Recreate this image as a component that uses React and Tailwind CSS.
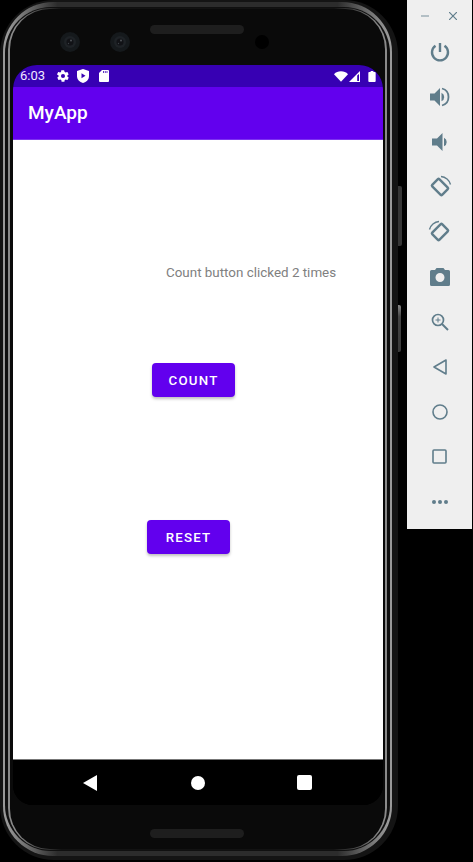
import { useState } from "react";

const panelIcon = "#607d8b";

function StatusIcons() {
  return (
    <div className="flex items-center ml-[11px]">
      <svg width="14" height="14" viewBox="0 0 24 24" fill="#fff">
        <path d="M19.4 13c.1-.3.1-.7.1-1s0-.7-.1-1l2.1-1.600c.2-.2.2-.4.1-.6l-2-3.500c-.1-.2-.4-.3-.6-.2l-2.500 1c-.5-.4-1.100-.7-1.700-1L14 2.400c0-.2-.2-.4-.5-.4h-4c-.3 0-.5.2-.5.400l-.4 2.700c-.6.3-1.200.6-1.700 1l-2.500-1c-.2-.1-.5 0-.6.2l-2 3.500c-.1.2-.1.4.1.6L4.500 11c0 .3-.1.700-.1 1s0 .7.1 1l-2.100 1.600c-.2.2-.2.4-.1.6l2 3.500c.1.2.4.3.6.2l2.500-1c.5.4 1.100.7 1.700 1l.4 2.700c0 .2.2.4.5.4h4c.3 0 .5-.2.5-.4l.4-2.700c.6-.3 1.200-.6 1.700-1l2.500 1c.2.1.5 0 .6-.2l2-3.500c.1-.2.1-.4-.1-.6zM12 15.500a3.500 3.500 0 1 1 0-7 3.500 3.500 0 0 1 0 7z" />
      </svg>
      <svg width="12" height="14" viewBox="0 0 12 14" className="ml-[7px]">
        <path d="M6 0 12 2v5c0 3.400-2.500 6-6 7-3.500-1-6-3.600-6-7V2z" fill="#fff" />
        <path d="M4.500 4.200v5l4-2.500z" fill="#3700b3" />
      </svg>
      <svg width="10" height="12" viewBox="0 0 10 12" className="ml-[10px]">
        <path d="M3 0h6a1 1 0 0 1 1 1v10a1 1 0 0 1-1 1H1a1 1 0 0 1-1-1V3z" fill="#fff" />
        <path d="M4.500 1v2M6.300 1v2M8 1v2" stroke="#3700b3" strokeWidth="0.8" />
      </svg>
    </div>
  );
}

function SystemIcons() {
  return (
    <div className="flex items-center">
      <svg width="14" height="11" viewBox="0 0 15 11">
        <path d="M0 3C2 1 4.600 0 7.500 0S13 1 15 3l-7.500 8z" fill="#fff" />
      </svg>
      <svg width="12" height="11" viewBox="0 0 12 11" className="ml-[1px]">
        <path d="M0 11 11 0v11z" fill="#fff" />
        <path d="M8.200 4.500v5.500h1.800V3z" fill="#3700b3" />
      </svg>
      <svg width="8" height="11" viewBox="0 0 8 12" className="ml-[7px]">
        <path d="M2.500 0h3v1H7a1 1 0 0 1 1 1v9a1 1 0 0 1-1 1H1a1 1 0 0 1-1-1V2a1 1 0 0 1 1-1h1.500z" fill="#fff" />
      </svg>
    </div>
  );
}

function Screen() {
  const [count, setCount] = useState(2);
  return (
    <div className="flex flex-col w-[370px] h-[740px] rounded-t-[24px] rounded-b-[20px] overflow-hidden bg-black shrink-0">
      <div className="h-[22px] bg-[#3700b3] flex items-center justify-between pl-[7px] pr-[7px] shrink-0">
        <div className="flex items-center">
          <span className="text-[13px] text-[#f0e8ff] font-['Roboto',sans-serif]">6:03</span>
          <StatusIcons />
        </div>
        <SystemIcons />
      </div>
      <div className="h-[53px] bg-[#6200ee] flex items-center pl-[15px] pt-[1px] border-b border-[#7d33f0] shrink-0">
        <span className="text-[19px] font-medium text-white font-['Roboto',sans-serif]">MyApp</span>
      </div>
      <div className="h-[620px] bg-white flex flex-col items-start shrink-0 border-b border-[#777] font-['Roboto',sans-serif]">
        <p className="ml-[153px] mt-[123px] h-[19px] leading-[19px] text-[13.4px] text-[#808080]">
          Count button clicked {count} times
        </p>
        <button
          onClick={() => setCount(count + 1)}
          className="ml-[139px] mt-[81px] w-[83px] h-[34px] pt-[1px] rounded-[4px] bg-[#6200ee] text-white text-[13.3px] font-medium tracking-[1.2px] shadow-[0_2px_3px_rgba(0,0,0,0.25)]"
        >
          COUNT
        </button>
        <button
          onClick={() => setCount(0)}
          className="ml-[134px] mt-[123px] w-[83px] h-[34px] pt-[1px] rounded-[4px] bg-[#6200ee] text-white text-[13.3px] font-medium tracking-[1.2px] shadow-[0_2px_3px_rgba(0,0,0,0.25)]"
        >
          RESET
        </button>
      </div>
      <div className="flex-1 flex items-center bg-black">
        <svg width="14" height="16" viewBox="0 0 14 16" className="ml-[70px]">
          <path d="M14 0v16L0 8z" fill="#fff" />
        </svg>
        <div className="w-[14px] h-[14px] rounded-full bg-white ml-[94px]" />
        <div className="w-[15px] h-[15px] rounded-[2px] bg-white ml-[92px]" />
      </div>
    </div>
  );
}

function Speaker({ className }) {
  return <div className={"w-[94px] h-[9px] rounded-full bg-[#1e1e1e] shrink-0 " + className} />;
}

function Camera({ className }) {
  return (
    <svg width="20" height="20" viewBox="0 0 20 20" className={"shrink-0 " + className}>
      <circle cx="10" cy="10" r="10" fill="#15191c" />
      <circle cx="10" cy="10" r="6" fill="#1e2226" />
      <circle cx="10" cy="10" r="3.500" fill="#111216" />
      <circle cx="11" cy="8.500" r="0.900" fill="#53575c" />
      <circle cx="8.500" cy="11.500" r="0.700" fill="#3c4046" />
    </svg>
  );
}

function Phone() {
  return (
    <div className="relative w-[398px] h-[860px] shrink-0 rounded-[54px] bg-[#141414] pt-[2px] pb-[4px] pl-[3px] pr-[6px]">
      {/* side keys */}
      <div className="absolute left-[398px] top-[186px] w-[4px] h-[60px] rounded-r-[2px] bg-[#363636]" />
      <div className="absolute left-[398px] top-[305px] w-[3px] h-[47px] rounded-r-[2px] bg-[linear-gradient(to_bottom,#888,#444_25%,#3a3a3a)]" />
      <div className="w-full h-full rounded-[50px] py-[5px] px-[2px] bg-[linear-gradient(to_right,#999_0%,#999_1%,#2c2c2c_14%,#2c2c2c_86%,#999_99%,#999_100%)]">
        <div className="w-full h-full rounded-[46px] py-[1px] px-[3px] bg-[#101010]">
          <div className="w-full h-full rounded-[42px] py-[1px] px-[2px] bg-[linear-gradient(to_right,#8a8a8a_0%,#8a8a8a_2%,#121212_14%,#121212_86%,#8a8a8a_98%,#8a8a8a_100%)]">
            <div className="w-full h-full rounded-[40px] pl-[3px] pr-[2px] bg-[#0a0a0a] flex flex-col">
              <div className="w-[370px] h-[56px] flex items-start shrink-0">
                <Camera className="ml-[47px] mt-[23px]" />
                <Camera className="ml-[30px] mt-[23px]" />
                <Speaker className="ml-[20px] mt-[16px]" />
                <div className="w-[14px] h-[14px] rounded-full bg-black ml-[11px] mt-[26px]" />
              </div>
              <Screen />
              <Speaker className="mt-[24px] ml-[137px]" />
            </div>
          </div>
        </div>
      </div>
    </div>
  );
}

function PanelIcon({ children }) {
  return <div className="h-[45px] flex items-center justify-center">{children}</div>;
}

function SidePanel() {
  return (
    <div className="w-[65px] h-[529px] ml-[9px] bg-[#efefef] flex flex-col shrink-0">
      <div className="flex items-center justify-between h-[32px] pl-[14px] pr-[15px]">
        <svg width="8" height="8" viewBox="0 0 8 8"><path d="M0 4h8" stroke={panelIcon} strokeWidth="1.200" opacity="0.7" /></svg>
        <svg width="8" height="8" viewBox="0 0 8 8"><path d="M0 0l8 8M8 0 0 8" stroke={panelIcon} strokeWidth="1.200" /></svg>
      </div>
      <div className="mt-[-3px]">
        <PanelIcon>
          <svg width="20" height="20" viewBox="0 0 20 20" fill="none" stroke={panelIcon} strokeWidth="2.400">
            <path d="M10 1v9" />
            <path d="M5.500 3.800a8 8 0 1 0 9 0" />
          </svg>
        </PanelIcon>
        <PanelIcon>
          <svg width="20" height="20" viewBox="0 0 20 20" fill="none">
            <path d="M0 6.500h4.500L10 1v18l-5.500-5.500H0z" fill={panelIcon} />
            <path d="M11.500 5.800a4.600 4.600 0 0 1 0 8.400z" fill={panelIcon} />
            <path d="M12 1.500c4 1 6.500 4.500 6.500 8.500s-2.500 7.500-6.500 8.500" stroke={panelIcon} strokeWidth="1.800" />
          </svg>
        </PanelIcon>
        <PanelIcon>
          <svg width="16" height="20" viewBox="0 0 16 20">
            <path d="M0 6.500h5L10.500 1v18L5 13.500H0z" fill={panelIcon} />
            <path d="M12 5.800a4.600 4.600 0 0 1 0 8.400z" fill={panelIcon} />
          </svg>
        </PanelIcon>
        <PanelIcon>
          <svg width="24" height="24" viewBox="0 0 24 24" fill="none" stroke={panelIcon}>
            <rect x="5" y="7" width="14" height="10" rx="1" strokeWidth="2.400" transform="rotate(45 12 12)" />
            <path d="M13 1.500c4.500.3 8.500 3.700 9.500 8" strokeWidth="1.400" />
          </svg>
        </PanelIcon>
        <PanelIcon>
          <svg width="24" height="24" viewBox="0 0 24 24" fill="none" stroke={panelIcon}>
            <rect x="5" y="7" width="14" height="10" rx="1" strokeWidth="2.400" transform="rotate(-45 12 12)" />
            <path d="M11 1.500C6.500 1.800 2.500 5.200 1.500 9.500" strokeWidth="1.400" />
          </svg>
        </PanelIcon>
        <PanelIcon>
          <svg width="20" height="18" viewBox="0 0 20 18">
            <path fillRule="evenodd" d="M6.500 0h7L15 2h3.500A1.500 1.500 0 0 1 20 3.500v13a1.500 1.500 0 0 1-1.500 1.500h-17A1.500 1.500 0 0 1 0 16.500v-13A1.500 1.500 0 0 1 1.500 2H5zM10 5a4.500 4.500 0 1 0 0 9 4.500 4.500 0 0 0 0-9z" fill={panelIcon} />
          </svg>
        </PanelIcon>
        <PanelIcon>
          <svg width="18" height="18" viewBox="0 0 18 18" fill="none" stroke={panelIcon}>
            <circle cx="7" cy="7" r="5.500" strokeWidth="1.700" />
            <path d="M11 11l6 6" strokeWidth="2" />
            <path d="M7 4.500v5M4.500 7h5" strokeWidth="1" />
          </svg>
        </PanelIcon>
        <PanelIcon>
          <svg width="14" height="16" viewBox="0 0 14 16" fill="none" stroke={panelIcon} strokeWidth="1.600" strokeLinejoin="round">
            <path d="M13 1v14L1 8z" />
          </svg>
        </PanelIcon>
        <PanelIcon>
          <svg width="16" height="16" viewBox="0 0 16 16" fill="none" stroke={panelIcon} strokeWidth="1.600">
            <circle cx="8" cy="8" r="7" />
          </svg>
        </PanelIcon>
        <PanelIcon>
          <svg width="15" height="15" viewBox="0 0 15 15" fill="none" stroke={panelIcon} strokeWidth="1.600">
            <rect x="1" y="1" width="13" height="13" rx="1" />
          </svg>
        </PanelIcon>
        <PanelIcon>
          <svg width="16" height="4" viewBox="0 0 16 4" fill={panelIcon}>
            <circle cx="2" cy="2" r="2" />
            <circle cx="8" cy="2" r="2" />
            <circle cx="14" cy="2" r="2" />
          </svg>
        </PanelIcon>
      </div>
    </div>
  );
}

export default function App() {
  return (
    <div className="w-[473px] h-[862px] bg-black flex items-start overflow-hidden">
      <Phone />
      <SidePanel />
    </div>
  );
}
